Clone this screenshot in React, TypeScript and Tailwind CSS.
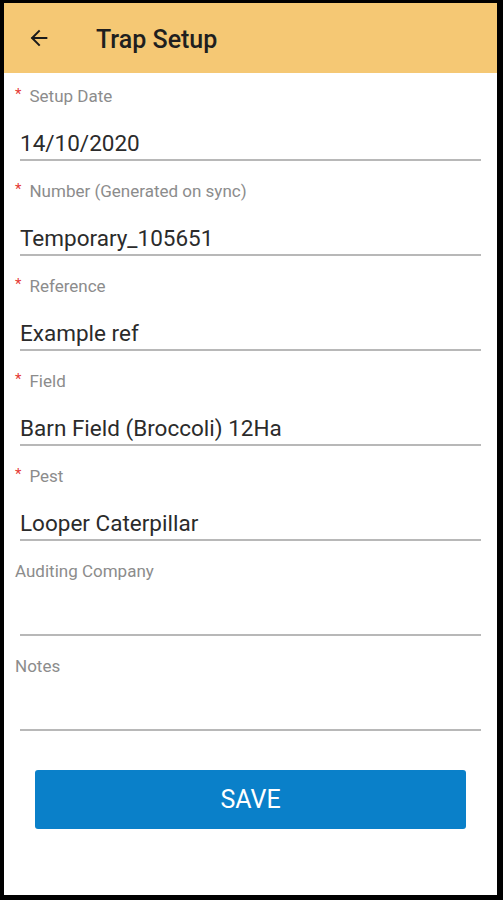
const fields = [
  { label: "Setup Date", value: "14/10/2020", required: true },
  { label: "Number (Generated on sync)", value: "Temporary_105651", required: true },
  { label: "Reference", value: "Example ref", required: true },
  { label: "Field", value: "Barn Field (Broccoli) 12Ha", required: true },
  { label: "Pest", value: "Looper Caterpillar", required: true },
  { label: "Auditing Company", value: "", required: false },
  { label: "Notes", value: "", required: false },
];

function FormField({ label, value, required }: { label: string; value: string; required: boolean }) {
  return (
    <div className="h-[95px]">
      <div className="flex h-[20px] items-center px-[11px] text-[17px] leading-[20px] text-[#8c8c8c]">
        {required && <span className="mr-[8px] mt-[-4px] text-[15px] text-[#e53935]">*</span>}
        <span>{label}</span>
      </div>
      <div className="mx-4 mt-[23px] border-b-2 border-[#b8b8b8] pb-[2px]">
        <div className="h-[28px] text-[22.5px] leading-[28px] text-[#2b2b2b]">{value}</div>
      </div>
    </div>
  );
}

export default function App() {
  return (
    <div
      className="h-[900px] w-[503px] bg-black pb-[5px] pl-[4px] pr-[6px] pt-[3px]"
      style={{ fontFamily: "Roboto, 'Liberation Sans', sans-serif" }}
    >
      <div className="flex h-full flex-col bg-white">
        <div className="flex h-[70px] items-center bg-[#f5c874]">
          <svg
            className="ml-[24px]"
            width="22"
            height="22"
            viewBox="0 0 24 24"
            fill="none"
            stroke="#1a1a1a"
            strokeWidth="2.2"
            strokeLinecap="square"
          >
            <path d="M20 12H5" />
            <path d="M12 4.5L4.5 12L12 19.5" />
          </svg>
          <span className="ml-[46px] mt-[4px] text-[25px] font-medium text-[#1f1f1f]">Trap Setup</span>
        </div>
        <div className="pt-[13px]">
          {fields.map((f) => (
            <FormField key={f.label} {...f} />
          ))}
        </div>
        <button
          type="button"
          className="mx-[31px] mt-[19px] h-[59px] rounded-[3px] bg-[#0a80c9] text-[25px] text-white"
        >
          SAVE
        </button>
      </div>
    </div>
  );
}
